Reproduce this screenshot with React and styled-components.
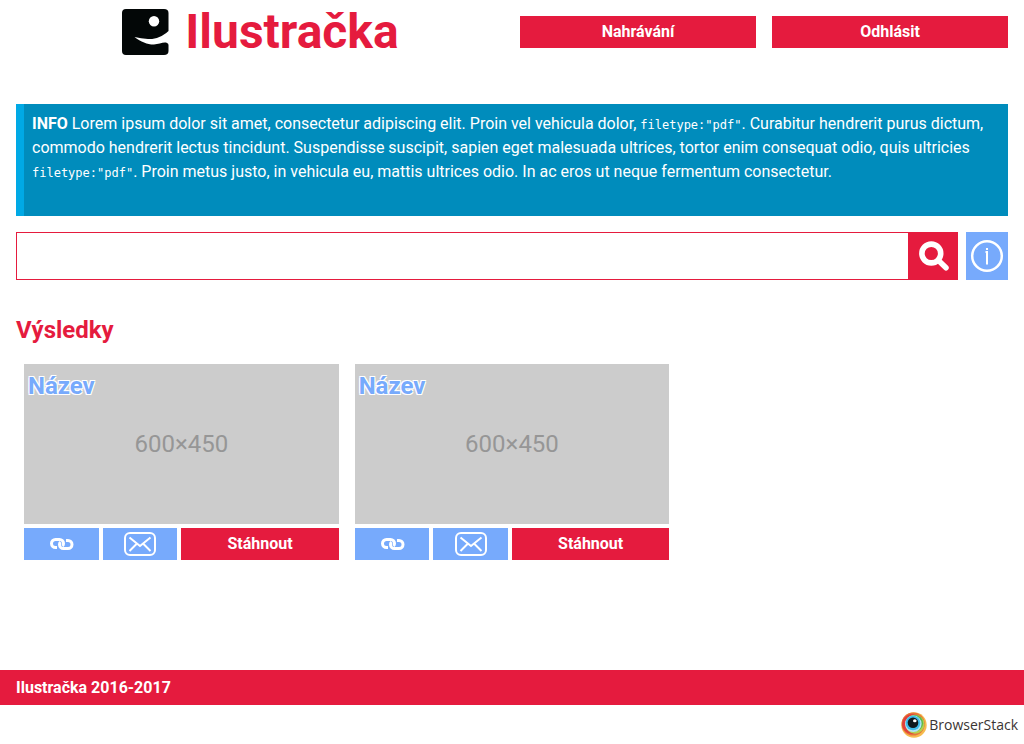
import React from "react";
import styled, { createGlobalStyle } from "styled-components";

const RED = "#e51b3e";
const BLUE = "#77aafc";

const GlobalStyle = createGlobalStyle`
  *, *::before, *::after { box-sizing: border-box; }
  body {
    margin: 0;
    background: #fff;
    color: #fff;
    font: 16px/24px Roboto, "Liberation Sans", sans-serif;
  }
  button, input { font: inherit; margin: 0; border-radius: 0; }
`;

const Header = styled.header`
  display: grid;
  grid-template-columns: 1fr 1fr;
  padding: 0 8px;
`;

const Brand = styled.a`
  display: flex;
  align-items: center;
  justify-content: center;
  gap: 16px;
  height: 64px;
  color: ${RED};
  text-decoration: none;
`;

const BrandName = styled.h1`
  margin: 0;
  font-size: 48px;
  line-height: 64px;
  font-weight: 700;
`;

const Nav = styled.nav`
  display: grid;
  grid-template-columns: 1fr 1fr;
  gap: 16px;
  padding: 16px 8px;
`;

const Button = styled.button`
  display: flex;
  align-items: center;
  justify-content: center;
  width: ${(p) => p.$width || "auto"};
  height: ${(p) => (p.$tall ? "48px" : "32px")};
  padding: 0;
  border: 0;
  background: ${(p) => (p.$blue ? BLUE : RED)};
  color: #fff;
  font-weight: 700;
  cursor: pointer;
`;

const Main = styled.main`
  padding: 40px 16px 110px;
`;

const Info = styled.section`
  min-height: 112px;
  padding: 8px;
  border-left: 8px solid #00a9e5;
  background: #008cbc;

  p { margin: 0; }
`;

const Code = styled.code`
  font: 12px "DejaVu Sans Mono", "Liberation Mono", monospace;
`;

const SearchForm = styled.form`
  display: flex;
  margin-top: 16px;
`;

const SearchInput = styled.input`
  flex: 1;
  min-width: 0;
  height: 48px;
  padding: 0 8px;
  border: 1px solid ${RED};
  border-right: 0;
  background: #fff;
  color: #222;
  outline: 0;
`;

const InfoSlot = styled.div`
  margin-left: 8px;
`;

const Heading = styled.h2`
  margin: 32px 0 0;
  color: ${RED};
  font-size: 24px;
  line-height: 36px;
  font-weight: 700;
`;

const Results = styled.div`
  display: grid;
  grid-template-columns: repeat(3, 1fr);
  margin-top: 16px;
`;

const Card = styled.article`
  padding: 0 8px;
`;

const Preview = styled.div`
  position: relative;
  display: flex;
  align-items: center;
  justify-content: center;
  height: 160px;
  background: #ccc;
  color: #969696;
  font-size: 24px;
`;

const CardTitle = styled.h3`
  position: absolute;
  top: 4px;
  left: 4px;
  margin: 0;
  color: ${BLUE};
  font-size: 24px;
  line-height: 36px;
  font-weight: 700;
  text-shadow: -1px -1px 0 #fff, 1px -1px 0 #fff, -1px 1px 0 #fff, 1px 1px 0 #fff;
`;

const Actions = styled.div`
  display: grid;
  grid-template-columns: 25% 25% 50%;
  margin-top: 4px;
`;

const Action = styled.div`
  display: grid;
  padding-right: ${(p) => (p.$last ? "0" : "4px")};
`;

const Footer = styled.footer`
  padding: 6px 16px 5px;
  background: ${RED};
  font-weight: 700;
`;

const Sponsor = styled.div`
  display: flex;
  justify-content: flex-end;
  padding: 7px 6px 0;
`;

const SponsorLink = styled.a`
  display: flex;
  align-items: center;
  gap: 2px;
  color: #3b3533;
  font: 500 14px/26px "Open Sans", sans-serif;
  text-decoration: none;
`;

const SmileLogo = () => (
  <svg width="48" height="48" viewBox="0 0 48 48" aria-hidden="true">
    <path
      fill="#030707"
      d="M5 1H43Q47.500 1 47.500 5V23C41 29 34 31.500 27 31Q20 30.700 13.500 29C20 34 27 36.700 33 36.500C38 36.300 43 33.500 46 35Q47.500 35.500 47.500 37V43Q47.500 47 43 47H5Q1 47 1 43V5Q1 1 5 1Z"
    />
    <circle cx="33" cy="13.200" r="5.200" fill="#fff" />
  </svg>
);

const SearchIcon = () => (
  <svg width="32" height="32" viewBox="0 0 32 32" fill="none" stroke="#fff" aria-hidden="true">
    <circle cx="14.300" cy="13.500" r="9.400" strokeWidth="5.600" />
    <path d="M21.500 20.500L29 27.800" strokeWidth="5.500" strokeLinecap="round" />
  </svg>
);

const InfoIcon = () => (
  <svg width="34" height="34" viewBox="0 0 34 34" fill="none" stroke="#fff" aria-hidden="true">
    <circle cx="17" cy="17" r="14.800" strokeWidth="2.500" />
    <path d="M15.500 13H17V25.500" strokeWidth="2" />
    <path d="M17 9V11" strokeWidth="2" />
  </svg>
);

const LinkIcon = () => (
  <svg width="26" height="16" viewBox="0 0 26 16" fill="none" stroke="#fff" strokeWidth="3" aria-hidden="true">
    <path d="M9 11.500H7.500A4 4 0 0 1 3.500 7.500A4 4 0 0 1 7.500 3.500H11.500A4 4 0 0 1 15.500 7.500Q15.500 9 14.500 10" />
    <path d="M18 4.500H20A4 4 0 0 1 24 8.500A4 4 0 0 1 20 12.500H15.500A4 4 0 0 1 11.500 8.500Q11.500 7 12.500 6" />
  </svg>
);

const MailIcon = () => (
  <svg width="32" height="24" viewBox="0 0 32 24" fill="none" stroke="#fff" strokeWidth="2" aria-hidden="true">
    <rect x="1" y="1" width="30" height="22" rx="5" />
    <path d="M5.500 5.500L16 14L26.500 5.500M5.500 19L12.500 12M26.500 19L19.500 12" />
  </svg>
);

const EyeLogo = () => (
  <svg width="26" height="26" viewBox="0 0 26 26" aria-hidden="true">
    <circle cx="13" cy="13" r="12.700" fill="#f6bb4e" />
    <circle cx="12.200" cy="12" r="11.600" fill="#e8733a" />
    <circle cx="11" cy="12" r="10" fill="#e0403d" />
    <circle cx="14" cy="12.200" r="9.500" fill="#b5cf4e" />
    <circle cx="13.800" cy="11.200" r="8.300" fill="#5bb84d" />
    <circle cx="12.300" cy="11.800" r="8.300" fill="#b5e3f4" />
    <circle cx="12" cy="11" r="7.300" fill="#3ebcec" />
    <circle cx="12" cy="10.700" r="5.300" fill="#10191f" />
    <ellipse cx="13.800" cy="8.700" rx="1.800" ry="1.500" fill="#fff" />
  </svg>
);

const ResultCard = ({ title }) => (
  <Card>
    <Preview>
      <span>600×450</span>
      <CardTitle>{title}</CardTitle>
    </Preview>
    <Actions>
      <Action>
        <Button $blue aria-label="Odkaz"><LinkIcon /></Button>
      </Action>
      <Action>
        <Button $blue aria-label="E-mail"><MailIcon /></Button>
      </Action>
      <Action $last>
        <Button>Stáhnout</Button>
      </Action>
    </Actions>
  </Card>
);

export default function App() {
  return (
    <>
      <GlobalStyle />
      <Header>
        <Brand href="#">
          <SmileLogo />
          <BrandName>Ilustračka</BrandName>
        </Brand>
        <Nav>
          <Button>Nahrávání</Button>
          <Button>Odhlásit</Button>
        </Nav>
      </Header>
      <Main>
        <Info>
          <p>
            <strong>INFO</strong> Lorem ipsum dolor sit amet, consectetur adipiscing elit. Proin vel
            vehicula dolor, <Code>filetype:"pdf"</Code>. Curabitur hendrerit purus dictum, commodo
            hendrerit lectus tincidunt. Suspendisse suscipit, sapien eget malesuada ultrices, tortor
            enim consequat odio, quis ultricies <Code>filetype:"pdf"</Code>. Proin metus justo, in
            vehicula eu, mattis ultrices odio. In ac eros ut neque fermentum consectetur.
          </p>
        </Info>
        <SearchForm onSubmit={(e) => e.preventDefault()}>
          <SearchInput type="search" aria-label="Hledat" />
          <Button type="submit" $tall $width="50px" aria-label="Hledat"><SearchIcon /></Button>
          <InfoSlot>
            <Button type="button" $blue $tall $width="42px" aria-label="Informace"><InfoIcon /></Button>
          </InfoSlot>
        </SearchForm>
        <Heading>Výsledky</Heading>
        <Results>
          <ResultCard title="Název" />
          <ResultCard title="Název" />
        </Results>
      </Main>
      <Footer>Ilustračka 2016-2017</Footer>
      <Sponsor>
        <SponsorLink href="#">
          <EyeLogo />
          BrowserStack
        </SponsorLink>
      </Sponsor>
    </>
  );
}
